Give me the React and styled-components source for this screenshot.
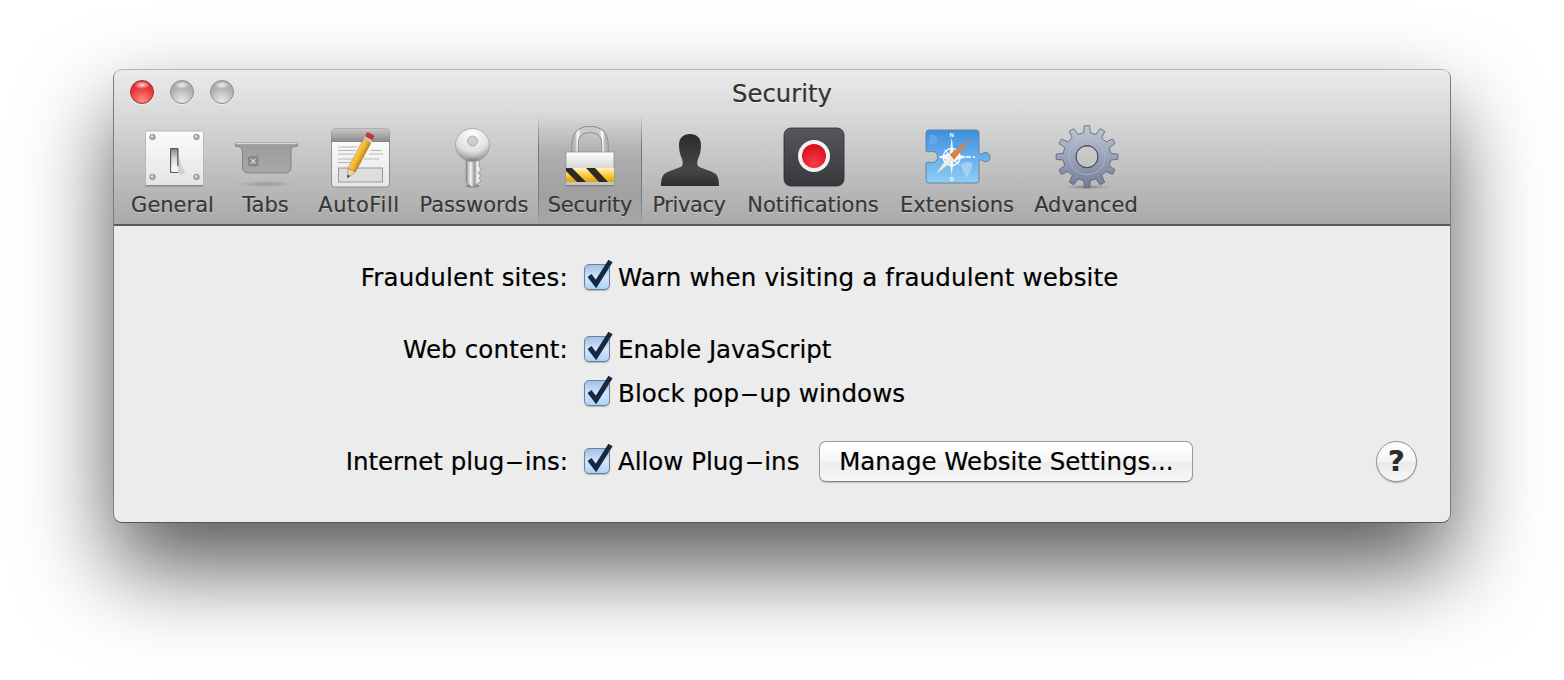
import React from "react";
import styled, { createGlobalStyle } from "styled-components";

const GlobalStyle = createGlobalStyle`
  html, body {
    margin: 0;
    padding: 0;
    background: #fff;
    width: 1564px;
    height: 680px;
    overflow: hidden;
  }
  body {
    font-family: "DejaVu Sans", "Liberation Sans", sans-serif;
  }
`;

const Page = styled.div`
  width: 1564px;
  height: 680px;
  padding: 69px 0 0 113px;
  box-sizing: border-box;
`;

const Window = styled.div`
  width: 1338px;
  height: 454px;
  box-sizing: border-box;
  border-radius: 9px;
  overflow: hidden;
  background: #ececec;
  border: 1px solid #7c7c7c;
  border-top-color: #b4b4b4;
  border-bottom-color: #555;
  box-shadow: 0 44px 90px rgba(0, 0, 0, 0.66);
  display: flex;
  flex-direction: column;
`;

const TitleBar = styled.div`
  height: 156px;
  box-sizing: border-box;
  background: linear-gradient(#ebebeb, #d8d8d8 30%, #a9a9a9);
  border-bottom: 2px solid #5b5b5b;
  display: flex;
  flex-direction: column;
  flex-shrink: 0;
`;

const TitleRow = styled.div`
  height: 45px;
  position: relative;
  display: flex;
  align-items: center;
  justify-content: center;
  padding-top: 1px;
  box-sizing: border-box;
`;

const Title = styled.div`
  font-size: 24.3px;
  color: #333;
  -webkit-text-stroke: 0.2px #333;
  text-shadow: 0 1px 0 rgba(255, 255, 255, 0.6);
  margin-top: 1px;
`;

const Lights = styled.div`
  position: absolute;
  left: 16px;
  top: 10px;
  display: flex;
  gap: 16px;
`;

const Light = styled.div`
  width: 24px;
  height: 24px;
  border-radius: 50%;
  box-sizing: border-box;
  border: 1px solid ${(p) => (p.$red ? "#a5282c" : "#8e8e8e")};
  background:
    radial-gradient(ellipse 8px 4px at 50% 18%, rgba(255, 255, 255, 0.85), rgba(255, 255, 255, 0) 100%),
    ${(p) =>
      p.$red
        ? "radial-gradient(circle at 50% 90%, #ff8a86, #ec3a3e 55%, #c72127)"
        : "radial-gradient(circle at 50% 90%, #e8e8e8, #b5b5b5 55%, #9a9a9a)"};
  box-shadow: 0 1px 0 rgba(255, 255, 255, 0.5);
`;

const Toolbar = styled.div`
  flex: 1;
  display: flex;
  padding-left: 8px;
  align-items: stretch;
`;

const ToolItem = styled.div`
  width: ${(p) => p.$w}px;
  flex-shrink: 0;
  display: flex;
  flex-direction: column;
  align-items: center;
  box-sizing: border-box;
  padding-top: 10px;
  ${(p) =>
    p.$active &&
    `
    background: linear-gradient(rgba(0,0,0,0) 0%, rgba(0,0,0,0.12) 35%, rgba(0,0,0,0.12) 70%, rgba(0,0,0,0.02) 100%);
    border-image: linear-gradient(rgba(90,90,90,0), rgba(90,90,90,0.7) 30%, rgba(90,90,90,0.5) 80%, rgba(90,90,90,0)) 1;
    border-left: 1px solid;
    border-right: 1px solid;
  `}
`;

const ToolIcon = styled.svg`
  width: 64px;
  height: 64px;
  display: block;
  overflow: visible;
  flex-shrink: 0;
`;

const ToolLabel = styled.div`
  font-size: 21px;
  line-height: 28px;
  margin-top: 2px;
  color: #363636;
  -webkit-text-stroke: 0.15px #363636;
  white-space: nowrap;
  letter-spacing: ${(p) => p.$ls || 0}px;
  text-shadow: 0 1px 0 rgba(255, 255, 255, 0.35);
`;

const Content = styled.div`
  flex: 1;
  padding-top: 29px;
  display: flex;
  flex-direction: column;
`;

const Row = styled.div`
  display: flex;
  align-items: center;
  height: 44px;
  margin-top: ${(p) => p.$gap || 0}px;
  color: #000;
  font-size: 24.5px;
  -webkit-text-stroke: 0.2px #000;
`;

const RowLabel = styled.div`
  width: 454px;
  text-align: right;
  white-space: nowrap;
  flex-shrink: 0;
  letter-spacing: ${(p) => p.$ls || 0}px;
`;

const Option = styled.div`
  display: flex;
  align-items: center;
  margin-left: 16px;
  gap: 8px;
  white-space: nowrap;
  letter-spacing: ${(p) => p.$ls || 0}px;
`;

const Hyphen = styled.span`
  display: inline-block;
  transform: scaleX(2.2);
  margin: 0 5.8px;
`;

const CheckBox = styled.div`
  position: relative;
  width: 26px;
  height: 26px;
  box-sizing: border-box;
  border-radius: 5px;
  border: 1px solid #6e7f9c;
  background: linear-gradient(#9fc0e8, #bcd6f3 30%, #d3e6fb 50%, #a9d3fa);
  box-shadow: 0 1px 1px rgba(0, 0, 0, 0.25);
  flex-shrink: 0;
`;

const CheckMark = styled.svg`
  position: absolute;
  left: 0;
  top: -8px;
  width: 30px;
  height: 34px;
  overflow: visible;
`;

const PushButton = styled.button`
  margin-left: 20px;
  width: 374px;
  height: 41px;
  border-radius: 7px;
  border: 1px solid #9a9a9a;
  border-bottom-color: #858585;
  background: linear-gradient(#ffffff, #f6f6f6 50%, #ececec 52%, #f7f7f7);
  box-shadow: 0 1px 1px rgba(0, 0, 0, 0.18);
  font-family: inherit;
  font-size: 24.5px;
  -webkit-text-stroke: 0.2px #000;
  color: #000;
  padding: 0;
`;

const HelpButton = styled.button`
  margin-left: auto;
  margin-right: 33px;
  width: 41px;
  height: 41px;
  border-radius: 50%;
  border: 1px solid #8f8f8f;
  background: linear-gradient(#ffffff, #f4f4f4 50%, #e9e9e9 52%, #f8f8f8);
  box-shadow: 0 1px 1px rgba(0, 0, 0, 0.25);
  font-family: inherit;
  font-weight: bold;
  font-size: 29px;
  color: #2c2c2c;
  padding: 0;
`;

const GeneralIcon = () => (
  <ToolIcon viewBox="0 0 64 64">
    <defs>
      <linearGradient id="plate" x1="0" y1="0" x2="0" y2="1">
        <stop offset="0" stopColor="#fbfbfb" />
        <stop offset="1" stopColor="#e4e4e4" />
      </linearGradient>
      <linearGradient id="lever" x1="0" y1="0" x2="0" y2="1">
        <stop offset="0" stopColor="#8a8a8a" />
        <stop offset="0.45" stopColor="#dcdcdc" />
        <stop offset="1" stopColor="#ffffff" />
      </linearGradient>
    </defs>
    <rect x="4.5" y="6" width="58" height="55" rx="1.5" fill="url(#plate)" stroke="#a8a8a8" strokeWidth="0.7" />
    <rect x="4.5" y="60" width="58" height="1.5" fill="#8c8c8c" />
    {[[11.5, 12], [55.5, 12], [11.5, 52], [55.5, 52]].map(([x, y]) => (
      <g key={`${x}-${y}`}>
        <circle cx={x} cy={y} r="2.8" fill="#a9a9a9" stroke="#777" strokeWidth="0.6" />
        <circle cx={x - 0.5} cy={y - 0.6} r="1.2" fill="#e4e4e4" />
      </g>
    ))}
    <path d="M37 30 L44 48 L40 50 L36 47 Z" fill="#000" opacity="0.1" />
    <rect x="29" y="23" width="8.5" height="25" rx="1" fill="#5a5a5a" />
    <rect x="30.2" y="24.2" width="6" height="22" fill="url(#lever)" />
    <rect x="30.2" y="41" width="7.5" height="6" rx="1" fill="#f3f3f3" />
  </ToolIcon>
);

const TabsIcon = () => (
  <ToolIcon viewBox="0 0 64 64">
    <defs>
      <linearGradient id="tabBody" x1="0" y1="0" x2="0" y2="1">
        <stop offset="0" stopColor="#9c9c9c" />
        <stop offset="1" stopColor="#a8a8a8" />
      </linearGradient>
      <radialGradient id="tabShadow">
        <stop offset="0" stopColor="#000" stopOpacity="0.18" />
        <stop offset="1" stopColor="#000" stopOpacity="0" />
      </radialGradient>
    </defs>
    <ellipse cx="32" cy="59" rx="29" ry="3.5" fill="url(#tabShadow)" />
    <path
      d="M2.5 18 H62.5 Q63.5 18 63.5 19 V20.5 Q63.5 21.5 62 21.5 H61 Q57.5 21.5 57 25 V42 Q57 48 50.5 48 H15 Q8.5 48 8.5 42 V27 Q8.5 22.5 4 21.5 H2.5 Q1.5 21.5 1.5 20.5 V19 Q1.5 18 2.5 18 Z"
      fill="url(#tabBody)"
      stroke="#707070"
      strokeWidth="0.7"
    />
    <path d="M2 18.6 H63" stroke="#e2e2e2" strokeWidth="1" />
    <rect x="14.5" y="31.5" width="9.5" height="9.5" rx="1.5" fill="#8a8a8a" stroke="#777" strokeWidth="0.5" />
    <path d="M17 34 L21.5 38.5 M21.5 34 L17 38.5" stroke="#d2d2d2" strokeWidth="1.2" />
  </ToolIcon>
);

const AutoFillIcon = () => (
  <ToolIcon viewBox="0 0 64 64">
    <defs>
      <linearGradient id="docHead" x1="0" y1="0" x2="0" y2="1">
        <stop offset="0" stopColor="#c6c6c6" />
        <stop offset="1" stopColor="#8d8d8d" />
      </linearGradient>
      <linearGradient id="docBody" x1="0" y1="0" x2="0" y2="1">
        <stop offset="0" stopColor="#ffffff" />
        <stop offset="1" stopColor="#e6e6e6" />
      </linearGradient>
      <linearGradient id="pencil" x1="0" y1="0" x2="1" y2="0">
        <stop offset="0" stopColor="#f7cf55" />
        <stop offset="0.5" stopColor="#f3b52c" />
        <stop offset="1" stopColor="#c9851a" />
      </linearGradient>
    </defs>
    <rect x="4.5" y="4" width="58" height="58" rx="3" fill="url(#docBody)" stroke="#7c7c7c" strokeWidth="0.8" />
    <path d="M4.5 16 V7 Q4.5 4 7.5 4 H59.5 Q62.5 4 62.5 7 V16 Z" fill="url(#docHead)" />
    <path d="M4.5 16.5 H62.5" stroke="#666" strokeWidth="0.8" />
    <g stroke="#a6a6a6" strokeWidth="0.8">
      <path d="M11 22 H30 M11 25.5 H29 M44 25.5 H55" />
      <path d="M11 29 H27 M42 29 H56" />
      <path d="M11 34 H28 M37 34 H52 M11 37.5 H24" />
    </g>
    <rect x="11.5" y="43" width="44" height="14" fill="#dedede" stroke="#9a9a9a" strokeWidth="1" />
    <g transform="translate(20.5 53) rotate(28)">
      <path d="M-4.2 -9 L0 0 L4.2 -9 Z" fill="#ecd3a8" stroke="#8a6a30" strokeWidth="0.4" />
      <path d="M-1.2 -3 L0 0 L1.2 -3 Z" fill="#222" />
      <rect x="-4.2" y="-42" width="8.4" height="33" fill="url(#pencil)" stroke="#9c6a12" strokeWidth="0.4" />
      <rect x="-4.2" y="-45" width="8.4" height="3" fill="#c9c9c9" />
      <rect x="-4.2" y="-50" width="8.4" height="5" rx="1.5" fill="#c9353a" />
    </g>
  </ToolIcon>
);

const KeyIcon = () => (
  <ToolIcon viewBox="0 0 64 64">
    <defs>
      <radialGradient id="keyHead" cx="0.5" cy="0.2" r="0.85">
        <stop offset="0" stopColor="#ffffff" />
        <stop offset="0.6" stopColor="#dfdfdf" />
        <stop offset="1" stopColor="#7e7e7e" />
      </radialGradient>
      <linearGradient id="keyShaft" x1="0" y1="0" x2="1" y2="0">
        <stop offset="0" stopColor="#8d8d8d" />
        <stop offset="0.3" stopColor="#f4f4f4" />
        <stop offset="0.55" stopColor="#9a9a9a" />
        <stop offset="0.75" stopColor="#f5f5f5" />
        <stop offset="1" stopColor="#c6c6c6" />
      </linearGradient>
    </defs>
    <ellipse cx="30.5" cy="61" rx="7" ry="1.6" fill="#000" opacity="0.25" />
    <path
      d="M24 32 H37 V41 L39.5 44.5 L36 48 L39 50.5 L37 53 L39 56 L31 62 H30 L24 57 Z"
      fill="url(#keyShaft)"
      stroke="#7d7d7d"
      strokeWidth="0.6"
    />
    <path
      fillRule="evenodd"
      d="M30.5 3.5 A17 16.5 0 1 1 30.4 3.5 Z M30.5 11 A5 5 0 1 0 30.6 11 Z"
      fill="url(#keyHead)"
      stroke="#989898"
      strokeWidth="0.7"
    />
    <path d="M25 33 H36 L36 36 H25 Z" fill="#777" opacity="0.35" />
  </ToolIcon>
);

const LockIcon = () => (
  <ToolIcon viewBox="0 0 64 64">
    <defs>
      <linearGradient id="shackle" x1="0" y1="0" x2="1" y2="0">
        <stop offset="0" stopColor="#b5b5b5" />
        <stop offset="0.09" stopColor="#ffffff" />
        <stop offset="0.2" stopColor="#c9c9c9" />
        <stop offset="0.8" stopColor="#c9c9c9" />
        <stop offset="0.91" stopColor="#ffffff" />
        <stop offset="1" stopColor="#b5b5b5" />
      </linearGradient>
      <linearGradient id="lockBody" x1="0" y1="0" x2="0" y2="1">
        <stop offset="0" stopColor="#ffffff" />
        <stop offset="0.5" stopColor="#d6d6d6" />
        <stop offset="1" stopColor="#d8d8d8" />
      </linearGradient>
      <linearGradient id="lockBand" x1="0" y1="0" x2="0" y2="1">
        <stop offset="0" stopColor="#fff6bd" />
        <stop offset="0.55" stopColor="#f9c935" />
        <stop offset="1" stopColor="#e09f17" />
      </linearGradient>
      <clipPath id="bandClip">
        <rect x="8" y="43" width="48" height="14" />
      </clipPath>
    </defs>
    <path
      d="M17 30 V19 C17 9 23 4.5 32 4.5 C41 4.5 47 9 47 19 V30"
      fill="none"
      stroke="#7e7e7e"
      strokeWidth="7"
    />
    <path
      d="M17 30 V19 C17 9 23 4.5 32 4.5 C41 4.5 47 9 47 19 V30"
      fill="none"
      stroke="url(#shackle)"
      strokeWidth="5.6"
    />
    <rect x="8" y="27" width="48" height="34" rx="1.5" fill="url(#lockBody)" stroke="#8a8a8a" strokeWidth="0.7" />
    <rect x="8" y="43" width="48" height="14" fill="url(#lockBand)" />
    <g clipPath="url(#bandClip)" fill="#2d2a22">
      <path d="M5 43 H14 L28 57 H19 Z" />
      <path d="M28 43 H37 L50 57 H41 Z" />
    </g>
    <rect x="8" y="57" width="48" height="4" fill="#c4c4c4" />
    <path d="M8 60.7 H56" stroke="#6f6f6f" strokeWidth="1" />
  </ToolIcon>
);

const PrivacyIcon = () => (
  <ToolIcon viewBox="0 0 64 64">
    <defs>
      <linearGradient id="person" x1="0" y1="0" x2="0" y2="1">
        <stop offset="0" stopColor="#2c2c2c" />
        <stop offset="0.7" stopColor="#474747" />
        <stop offset="1" stopColor="#2e2e2e" />
      </linearGradient>
    </defs>
    <path
      d="M33 9 C26 9 22 13 22 20 C22 25 23 30 25 34 C26 37 26 39 25 41 C22 43.5 13 45 8 48.5 C5 50.5 4 55 4 61 H62 C62 55 61 50.5 58 48.5 C53 45 44 43.5 41 41 C40 39 40 37 41 34 C43 30 44 25 44 20 C44 13 40 9 33 9 Z"
      fill="url(#person)"
    />
  </ToolIcon>
);

const NotificationsIcon = () => (
  <ToolIcon viewBox="0 0 64 64">
    <defs>
      <linearGradient id="notifBg" x1="0" y1="0" x2="0" y2="1">
        <stop offset="0" stopColor="#55575c" />
        <stop offset="1" stopColor="#37383c" />
      </linearGradient>
      <radialGradient id="notifRed" cx="0.5" cy="0.8" r="0.8">
        <stop offset="0" stopColor="#f33c44" />
        <stop offset="1" stopColor="#d40d18" />
      </radialGradient>
    </defs>
    <rect x="3" y="3" width="60" height="58" rx="7" fill="url(#notifBg)" stroke="#2a2a2c" strokeWidth="0.8" />
    <circle cx="33" cy="31" r="16" fill="#f2f2f2" />
    <circle cx="33" cy="31" r="12" fill="url(#notifRed)" />
  </ToolIcon>
);

const ExtensionsIcon = () => (
  <ToolIcon viewBox="0 0 64 64">
    <defs>
      <linearGradient id="puzzle" x1="0" y1="0" x2="0" y2="1">
        <stop offset="0" stopColor="#3f8fdf" />
        <stop offset="1" stopColor="#8fcdf5" />
      </linearGradient>
    </defs>
    <path
      d="M4 5 H51 Q54 5 54 8 V28 C55.5 30 56.5 28.5 60 27.5 C63 26.8 65 29.5 65 32 C65 34.5 63 37 60 36.5 C56.5 35.5 55.5 34 54 36 V55 Q54 58 51 58 H4 Q1 58 1 55 V38 C3 36 7 38.5 10 37 C13.5 35 13.5 29 10 27 C7 25.5 3 28 1 26 V8 Q1 5 4 5 Z"
      fill="url(#puzzle)"
      stroke="#5d7f9e"
      strokeWidth="0.9"
    />
    <path d="M35 40 C38 44 39 49 42 53 C45 47 48 42 47 38 C43 36 38 37 35 40 Z" fill="#b4dcf5" opacity="0.7" />
    <path d="M5 10 C10 9 14 13 12 17 C10 20 6 20 4 18 Z" fill="#74b4ea" opacity="0.6" />
    <path
      d="M26.7 12 L28.6 28 L42 32 L28.6 36 L26.7 50 L24.8 36 L13 32 L24.8 28 Z"
      fill="#ffffff"
      opacity="0.9"
    />
    <path d="M18 23 L25.5 29.5 L35 23 L28.5 30.5 L35 41 L26.5 34.5 L18 41 L24.5 32 Z" fill="#ffffff" opacity="0.7" />
    <circle cx="26.7" cy="32" r="8.5" fill="none" stroke="#ffffff" strokeWidth="1.3" />
    <path d="M45.7 14 L29 35 L24.5 29.5 Z" fill="#df7f40" />
    <path d="M11 49 L24.5 29.5 L29 35 Z" fill="#efece4" />
    <path d="M41 32 H46 M48 32 H50" stroke="#fff" strokeWidth="1.4" />
    <text x="26.7" y="12" textAnchor="middle" fontSize="6" fontWeight="bold" fill="#fff" fontFamily="Liberation Sans">N</text>
    <text x="26.7" y="56" textAnchor="middle" fontSize="6" fontWeight="bold" fill="#fff" fontFamily="Liberation Sans">S</text>
  </ToolIcon>
);

const gearPath = (() => {
  const cx = 33;
  const cy = 31.7;
  const teeth = 12;
  const out = 31;
  const root = 24;
  const pts = [];
  for (let i = 0; i < teeth; i++) {
    const a = (i / teeth) * Math.PI * 2 - Math.PI / 2;
    const s = (Math.PI * 2) / teeth;
    [
      [root, a - s * 0.27],
      [out, a - s * 0.16],
      [out, a + s * 0.16],
      [root, a + s * 0.27],
    ].forEach(([r, t]) => {
      pts.push(`${(cx + r * Math.cos(t)).toFixed(2)} ${(cy + r * Math.sin(t)).toFixed(2)}`);
    });
  }
  return `M${pts.join(" L")} Z M${cx + 11} ${cy} A11 11 0 1 0 ${cx - 11} ${cy} A11 11 0 1 0 ${cx + 11} ${cy} Z`;
})();

const GearIcon = () => (
  <ToolIcon viewBox="0 0 64 64">
    <defs>
      <linearGradient id="gear" x1="0" y1="0" x2="0" y2="1">
        <stop offset="0" stopColor="#c0c6d4" />
        <stop offset="0.5" stopColor="#9aa3ba" />
        <stop offset="1" stopColor="#737c96" />
      </linearGradient>
      <radialGradient id="gearShadow">
        <stop offset="0" stopColor="#000" stopOpacity="0.3" />
        <stop offset="1" stopColor="#000" stopOpacity="0" />
      </radialGradient>
    </defs>
    <ellipse cx="33" cy="62" rx="24" ry="2.4" fill="url(#gearShadow)" />
    <path d={gearPath} fillRule="evenodd" fill="url(#gear)" stroke="#555e78" strokeWidth="0.8" strokeLinejoin="round" />
    <circle cx="33" cy="31.7" r="18" fill="none" stroke="#b6bccd" strokeWidth="0.7" />
    <circle cx="33" cy="31.7" r="11" fill="none" stroke="#3c4458" strokeWidth="1" />
  </ToolIcon>
);

const tools = [
  { label: "General", w: 101, icon: GeneralIcon },
  { label: "Tabs", w: 85, icon: TabsIcon },
  { label: "AutoFill", w: 102, icon: AutoFillIcon, ls: 0.6 },
  { label: "Passwords", w: 128, icon: KeyIcon },
  { label: "Security", w: 104, icon: LockIcon, active: true, ls: -0.2 },
  { label: "Privacy", w: 94, icon: PrivacyIcon, ls: -0.4 },
  { label: "Notifications", w: 154, icon: NotificationsIcon },
  { label: "Extensions", w: 134, icon: ExtensionsIcon },
  { label: "Advanced", w: 124, icon: GearIcon },
];

const Check = ({ children, ls }) => (
  <Option $ls={ls}>
    <CheckBox>
      <CheckMark viewBox="0 0 30 34">
        <path d="M4.5 18.5 L11 27 L25.5 4" fill="none" stroke="#17283f" strokeWidth="5" strokeLinejoin="miter" />
      </CheckMark>
    </CheckBox>
    <span>{children}</span>
  </Option>
);

export default function App() {
  return (
    <Page>
      <GlobalStyle />
      <Window>
        <TitleBar>
          <TitleRow>
            <Lights>
              <Light $red />
              <Light />
              <Light />
            </Lights>
            <Title>Security</Title>
          </TitleRow>
          <Toolbar>
            {tools.map(({ label, w, icon: Icon, active, ls }) => (
              <ToolItem key={label} $w={w} $active={active}>
                <Icon />
                <ToolLabel $ls={ls}>{label}</ToolLabel>
              </ToolItem>
            ))}
          </Toolbar>
        </TitleBar>
        <Content>
          <Row>
            <RowLabel $ls={0.18}>Fraudulent sites:</RowLabel>
            <Check ls={0.18}>Warn when visiting a fraudulent website</Check>
          </Row>
          <Row $gap={28}>
            <RowLabel $ls={0.15}>Web content:</RowLabel>
            <Check ls={-0.05}>Enable JavaScript</Check>
          </Row>
          <Row>
            <RowLabel />
            <Check ls={0.1}>Block pop<Hyphen>-</Hyphen>up windows</Check>
          </Row>
          <Row $gap={24}>
            <RowLabel>Internet plug<Hyphen>-</Hyphen>ins:</RowLabel>
            <Check>Allow Plug<Hyphen>-</Hyphen>ins</Check>
            <PushButton>Manage Website Settings...</PushButton>
            <HelpButton>?</HelpButton>
          </Row>
        </Content>
      </Window>
    </Page>
  );
}
